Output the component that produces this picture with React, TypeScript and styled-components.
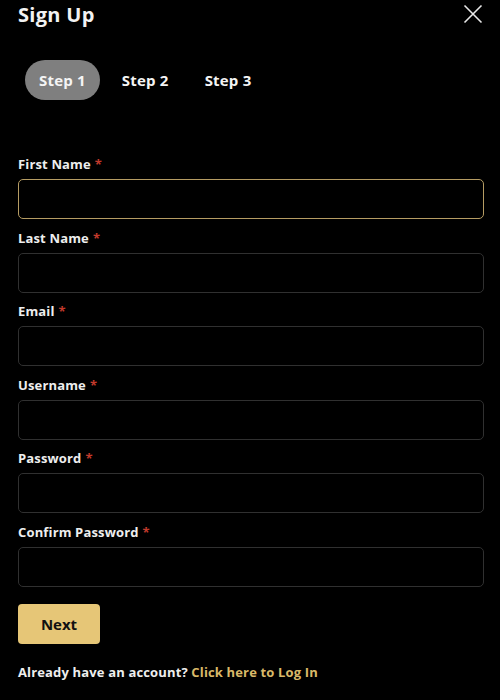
import * as React from 'react';
import styled, { createGlobalStyle, css } from 'styled-components';

const GlobalStyle = createGlobalStyle`
  html, body {
    margin: 0;
    padding: 0;
    background: #000;
  }
  * {
    box-sizing: border-box;
  }
`;

const Page = styled.div`
  width: 500px;
  height: 700px;
  padding: 0 16px 0 18px;
  background: #000;
  color: #f2f2f2;
  font-family: 'Open Sans', 'Liberation Sans', sans-serif;
  font-weight: 700;
  overflow: hidden;
`;

const Header = styled.div`
  display: flex;
  justify-content: space-between;
  align-items: center;
  height: 28px;
`;

const Title = styled.h1`
  margin: 0;
  font-size: 20px;
  font-weight: 700;
  letter-spacing: 0.3px;
  color: #f2f2f2;
`;

const CloseButton = styled.button`
  display: grid;
  place-items: center;
  width: 22px;
  height: 22px;
  padding: 0;
  background: none;
  border: none;
  color: #e8e8e8;
  cursor: pointer;
`;

const Steps = styled.div`
  display: flex;
  gap: 8px;
  margin: 32px 0 0 7px;
`;

const Step = styled.div<{ $active?: boolean }>(
  ({ $active }) => css`
    height: 40px;
    padding: 0 14px;
    display: flex;
    align-items: center;
    border-radius: 20px;
    font-size: 15px;
    letter-spacing: 0.2px;
    color: #f4f4f4;
    background: ${$active ? '#7f7f7f' : 'transparent'};
  `,
);

const Form = styled.form`
  margin-top: 56px;
  display: flex;
  flex-direction: column;
`;

const Field = styled.div`
  display: flex;
  flex-direction: column;
  gap: 7px;
  margin-bottom: 10.5px;
`;

const Label = styled.label`
  font-size: 13px;
  line-height: 16px;
  letter-spacing: 0.15px;
  color: #eeeeee;
`;

const Required = styled.span`
  color: #c23a2c;
  margin-left: 4px;
`;

const Input = styled.input<{ $focused?: boolean }>(
  ({ $focused }) => css`
    width: 100%;
    height: 40px;
    padding: 0 12px;
    background: #000;
    border: 1px solid ${$focused ? '#b59c63' : '#303030'};
    border-radius: 5px;
    color: #fff;
    font: inherit;
    outline: none;
  `,
);

const NextButton = styled.button`
  align-self: flex-start;
  width: 82px;
  height: 40px;
  margin-top: 6.5px;
  border: none;
  border-radius: 4px;
  background: #e6c677;
  color: #111;
  font-family: inherit;
  font-weight: 700;
  font-size: 15px;
  cursor: pointer;
`;

const Footer = styled.p`
  margin: 20px 0 0;
  font-size: 13px;
  line-height: 16px;
  letter-spacing: 0.15px;
  color: #eeeeee;
`;

const LoginLink = styled.a`
  color: #d9b968;
  text-decoration: none;
`;

const fields = [
  { label: 'First Name', type: 'text' },
  { label: 'Last Name', type: 'text' },
  { label: 'Email', type: 'email' },
  { label: 'Username', type: 'text' },
  { label: 'Password', type: 'password' },
  { label: 'Confirm Password', type: 'password' },
];

const App = () => (
  <>
    <GlobalStyle />
    <Page>
      <Header>
        <Title>Sign Up</Title>
        <CloseButton aria-label="Close">
          <svg width="20" height="20" viewBox="0 0 20 20" fill="none" stroke="currentColor" strokeWidth="1.6">
            <path d="M1.5 1.5 L18.5 18.5 M18.5 1.5 L1.5 18.5" />
          </svg>
        </CloseButton>
      </Header>
      <Steps>
        <Step $active>Step 1</Step>
        <Step>Step 2</Step>
        <Step>Step 3</Step>
      </Steps>
      <Form onSubmit={(e) => e.preventDefault()}>
        {fields.map((f, i) => (
          <Field key={f.label}>
            <Label>
              {f.label}
              <Required>*</Required>
            </Label>
            <Input type={f.type} $focused={i === 0} />
          </Field>
        ))}
        <NextButton type="submit">Next</NextButton>
      </Form>
      <Footer>
        Already have an account? <LoginLink href="#">Click here to Log In</LoginLink>
      </Footer>
    </Page>
  </>
);

export default App;
